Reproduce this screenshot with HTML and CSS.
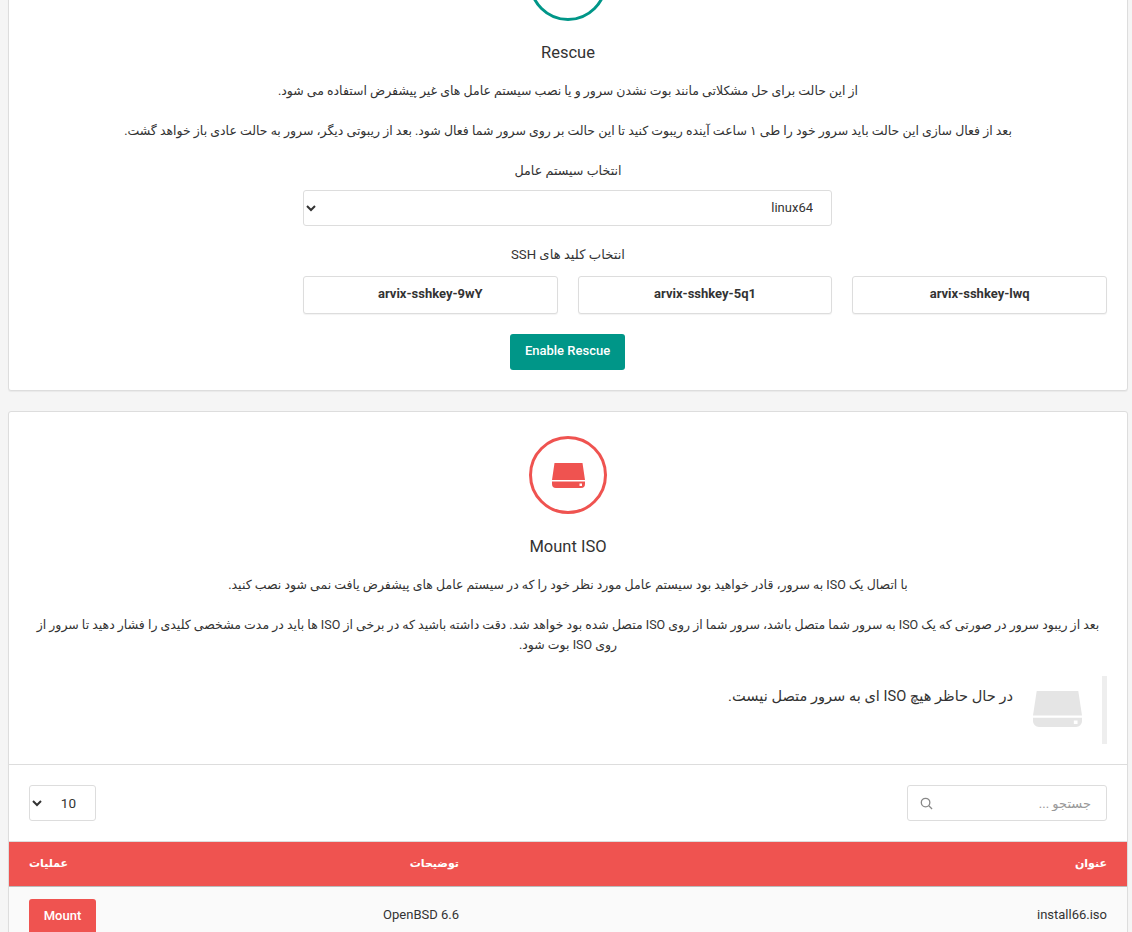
FILE: index.html
```html
<!DOCTYPE html>
<html lang="fa" dir="rtl">
<head>
  <meta charset="UTF-8" />
  <meta name="viewport" content="width=device-width, initial-scale=1.0"/>
  <title>Rescue / Mount ISO</title>
  <link rel="stylesheet" href="styles.css">
</head>
<body>

<div class="panel panel-rescue">
  <div class="panel-body">
    <div class="round-icon round-teal"></div>
    <h2 class="panel-title" dir="ltr">Rescue</h2>
    <p class="desc">از این حالت برای حل مشکلاتی مانند بوت نشدن سرور و یا نصب سیستم عامل های غیر پیشفرض استفاده می شود.</p>
    <p class="desc">بعد از فعال سازی این حالت باید سرور خود را طی ۱ ساعت آینده ریبوت کنید تا این حالت بر روی سرور شما فعال شود. بعد از ریبوتی دیگر، سرور به حالت عادی باز خواهد گشت.</p>

    <label class="field-label">انتخاب سیستم عامل</label>
    <select class="os-select">
      <option>linux64</option>
    </select>

    <label class="field-label field-label-keys">انتخاب کلید های SSH</label>
    <div class="keys">
      <button type="button" class="key-btn">arvix-sshkey-lwq</button>
      <button type="button" class="key-btn">arvix-sshkey-5q1</button>
      <button type="button" class="key-btn">arvix-sshkey-9wY</button>
    </div>

    <button type="button" class="btn btn-teal">Enable Rescue</button>
  </div>
</div>

<div class="panel">
  <div class="panel-body panel-body-iso">
    <div class="round-icon round-red">
      <svg class="disk-icon" viewBox=".5 0 33 25" preserveAspectRatio="none"><path fill-rule="evenodd" d="M3 0H31L33.5 17H.5ZM.5 18.5H33.5V21A4 4 0 0 1 29.500 25H4.500A4 4 0 0 1 .5 21ZM28 20.500V23H30.500V20.500Z"/></svg>
    </div>
    <h2 class="panel-title" dir="ltr">Mount ISO</h2>
    <p class="desc">با اتصال یک ISO به سرور، قادر خواهید بود سیستم عامل مورد نظر خود را که در سیستم عامل های پیشفرض یافت نمی شود نصب کنید.</p>
    <p class="desc">بعد از ریبود سرور در صورتی که یک ISO به سرور شما متصل باشد، سرور شما از روی ISO متصل شده بود خواهد شد. دقت داشته باشید که در برخی از ISO ها باید در مدت مشخصی کلیدی را فشار دهید تا سرور از روی ISO بوت شود.</p>

    <div class="notice">
      <svg class="notice-icon" viewBox=".5 0 33 25" preserveAspectRatio="none"><path fill-rule="evenodd" d="M3 0H31L33.5 17H.5ZM.5 18.5H33.5V21A4 4 0 0 1 29.500 25H4.500A4 4 0 0 1 .5 21ZM28 20.500V23H30.500V20.500Z"/></svg>
      <span class="notice-text">در حال حاظر هیچ ISO ای به سرور متصل نیست.</span>
    </div>
  </div>

  <div class="table-tools">
    <div class="search">
      <input type="text" placeholder="جستجو ...">
      <svg class="search-icon" viewBox="0 0 14 14"><circle cx="6" cy="6" r="4.600"/><path d="M9.500 9.500L13 13"/></svg>
    </div>
    <select class="page-size">
      <option>10</option>
    </select>
  </div>

  <table class="iso-table">
    <thead>
      <tr>
        <th class="col-title">عنوان</th>
        <th class="col-desc">توضیحات</th>
        <th class="col-actions">عملیات</th>
      </tr>
    </thead>
    <tbody>
      <tr>
        <td>install66.iso</td>
        <td>OpenBSD 6.6</td>
        <td class="col-actions"><button type="button" class="btn btn-red">Mount</button></td>
      </tr>
    </tbody>
  </table>
</div>

</body>
</html>
```

FILE: styles.css
```css
:root {
  --teal: #009688;
  --red: #ef5350;
  --text: #333;
  --line: #ddd;
}

* {
  box-sizing: border-box;
}

html, body {
  height: 932px;
  overflow: hidden;
}

body {
  margin: 0;
  padding: 0 4px 0 8px;
  background: #f5f5f5;
  color: var(--text);
  font-family: Roboto, "Noto Sans", "DejaVu Sans", sans-serif;
  font-size: 13px;
  line-height: 20px;
}

.panel {
  background: white;
  border: 1px solid var(--line);
  border-radius: 3px;
  margin-bottom: 20px;
  box-shadow: 0 1px 1px rgba(0, 0, 0, 0.05);
}

.panel-rescue {
  margin-top: -82px;
}

.panel-body {
  padding: 24px 20px 20px;
  text-align: center;
}

.round-icon {
  width: 78px;
  height: 78px;
  margin: 0 auto;
  border-radius: 50%;
  border: 3px solid;
  display: flex;
  align-items: center;
  justify-content: center;
}

.round-teal {
  color: var(--teal);
}

.round-red {
  color: var(--red);
}

.disk-icon {
  width: 33px;
  height: 25px;
  fill: currentColor;
}

.panel-title {
  margin: 22px 0 18px;
  font-size: 16.500px;
  font-weight: 400;
  line-height: 20px;
}

.panel-body-iso .panel-title {
  margin-top: 23px;
}

.desc {
  margin: 0 0 20px;
  font-size: 12.500px;
}

.field-label {
  display: block;
  margin-bottom: 9px;
  font-size: 12.700px;
}

.os-select {
  display: block;
  width: 529px;
  height: 36px;
  margin: 0 275px 19px 274px;
  padding: 0 14px 2px;
  background: white;
  border: 1px solid var(--line);
  border-radius: 3px;
  color: var(--text);
  font: inherit;
}

.field-label-keys {
  margin-bottom: 11px;
  font-size: 13.200px;
}

.keys {
  display: grid;
  grid-template-columns: repeat(3, 1fr);
  gap: 20px;
  margin-left: 274px;
  margin-bottom: 20px;
}

.key-btn {
  height: 38px;
  padding-bottom: 4px;
  background: white;
  border: 1px solid var(--line);
  border-radius: 3px;
  box-shadow: 0 1px 1px rgba(0, 0, 0, 0.05);
  color: var(--text);
  font: inherit;
  font-weight: 700;
}

.btn {
  border: none;
  border-radius: 3px;
  color: white;
  font: inherit;
  font-weight: 500;
}

.btn-teal {
  width: 115px;
  height: 36px;
  margin-right: 1px;
  padding-bottom: 4px;
  background: var(--teal);
}

.btn-red {
  width: 67px;
  height: 36px;
  padding-bottom: 4px;
  background: var(--red);
}

.notice {
  display: flex;
  align-items: flex-start;
  height: 68px;
  margin-top: 21px;
  padding: 10px 20px 0;
  border-right: 5px solid #eee;
}

.notice-icon {
  width: 49px;
  height: 36px;
  margin: 5px 0 0 20px;
  fill: #e5e5e5;
}

.notice-text {
  font-size: 14.600px;
}

.table-tools {
  display: flex;
  justify-content: space-between;
  align-items: center;
  padding: 20px;
  border-top: 1px solid var(--line);
}

.search {
  position: relative;
  width: 200px;
}

.search input {
  width: 100%;
  height: 36px;
  padding: 0 15px 0 36px;
  border: 1px solid var(--line);
  border-radius: 3px;
  color: var(--text);
  font: inherit;
}

.search input::placeholder {
  color: #999;
}

.search-icon {
  position: absolute;
  left: 13px;
  top: 12px;
  width: 13px;
  height: 13px;
  fill: none;
  stroke: #888;
  stroke-width: 1.400;
}

.page-size {
  width: 67px;
  height: 36px;
  padding: 0 15px;
  background: white;
  border: 1px solid var(--line);
  border-radius: 3px;
  color: var(--text);
  font: inherit;
  font-size: 13.500px;
}

.iso-table {
  width: 100%;
  table-layout: fixed;
  border-collapse: collapse;
  border-top: 1px solid var(--line);
}

.iso-table th {
  height: 45px;
  padding: 0 20px;
  background: var(--red);
  border-bottom: 1px solid #bbb;
  color: white;
  font-size: 11px;
  font-weight: 700;
  text-align: right;
}

.iso-table td {
  padding: 18px 20px 0;
  background: #fafafa;
  text-align: right;
  vertical-align: top;
}

.iso-table .col-actions {
  text-align: left;
}

.iso-table td.col-actions {
  padding-top: 12px;
}

.col-title {
  width: 648px;
}

.iso-table th.col-actions {
  width: 107px;
}
```
